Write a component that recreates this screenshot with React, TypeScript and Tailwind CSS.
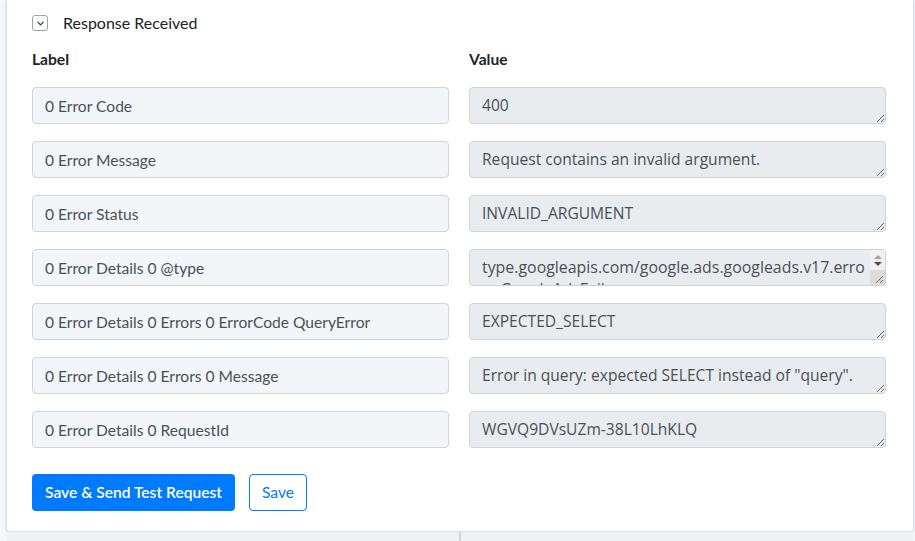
import { ChevronDown } from "lucide-react";

interface ResponseField {
  label: string;
  value: string;
  long?: boolean;
}

const fields: ResponseField[] = [
  { label: "0 Error Code", value: "400" },
  { label: "0 Error Message", value: "Request contains an invalid argument." },
  { label: "0 Error Status", value: "INVALID_ARGUMENT" },
  {
    label: "0 Error Details 0 @type",
    value: "type.googleapis.com/google.ads.googleads.v17.errors.GoogleAdsFailure",
    long: true,
  },
  { label: "0 Error Details 0 Errors 0 ErrorCode QueryError", value: "EXPECTED_SELECT" },
  {
    label: "0 Error Details 0 Errors 0 Message",
    value: 'Error in query: expected SELECT instead of "query".',
  },
  { label: "0 Error Details 0 RequestId", value: "WGVQ9DVsUZm-38L10LhKLQ" },
];

// little classic scrollbar shown on the textarea whose value wraps
function ScrollArrows() {
  return (
    <div className="pointer-events-none absolute right-px top-px flex h-[35px] w-[15px] flex-col overflow-hidden rounded-tr-[3px]">
      <div className="flex h-[20px] flex-col items-center justify-center gap-[3px] bg-[#f1f1f1]">
        <span className="h-0 w-0 border-x-[4px] border-b-[4px] border-x-transparent border-b-[#a3a3a3]" />
        <span className="h-0 w-0 border-x-[4px] border-t-[4px] border-x-transparent border-t-[#505050]" />
      </div>
      <div className="relative flex-1 bg-[#dcdcdc]">
        <svg className="absolute bottom-[1px] right-[1px]" width="9" height="9" viewBox="0 0 9 9">
          <path d="M8 1 L1 8 M8 5 L5 8" stroke="#6b6b6b" strokeWidth="1" />
        </svg>
      </div>
    </div>
  );
}

function FieldRow({ field }: { field: ResponseField }) {
  return (
    <div className="grid grid-cols-2 gap-x-5">
      <input
        className="h-[37px] w-full rounded-[4px] border border-[#ced4da] bg-[#f3f6f9] px-3 text-[15.6px] text-[#495057] outline-0"
        type="text"
        value={field.label}
        readOnly
      />
      <div className="relative">
        <textarea
          className={
            field.long
              ? "block h-[37px] w-full overflow-hidden rounded-[4px] border border-[#ced4da] bg-[#e9ecef] pl-3 pr-[19px] pt-[6px] text-[15.9px] leading-[22px] text-[#495057] outline-0 [font-family:'Open_Sans',sans-serif]"
              : "block h-[37px] w-full rounded-[4px] border border-[#ced4da] bg-[#e9ecef] px-3 pt-[6px] text-[15.6px] leading-[22px] text-[#495057] outline-0 [font-family:'Open_Sans',sans-serif]"
          }
          value={field.value}
          rows={1}
          disabled
        />
        {field.long && <ScrollArrows />}
      </div>
    </div>
  );
}

export default function App(): JSX.Element {
  return (
    <div className="h-[541px] w-[915px] overflow-hidden bg-[#f5f7fa] [font-family:Lato,sans-serif]">
      <div className="ml-[6px] w-[908px] rounded-b-[4px] border border-t-0 border-[#d8e2ee] bg-white pb-[20px] pl-[25px] pr-[27px] pt-[15px] shadow-[0_1px_3px_rgba(120,140,170,0.25)]">
        <div className="flex h-4 items-center">
          <span className="flex h-4 w-4 items-center justify-center rounded-[3px] border border-[#9ca3ab] text-[#333]">
            <ChevronDown size={11} strokeWidth={2.6} />
          </span>
          <span className="ml-[15px] text-[16px] text-[#222]">Response Received</span>
        </div>

        <div className="mt-[17px] grid grid-cols-2 gap-x-5 text-[15.6px] font-bold text-[#212529]">
          <span>Label</span>
          <span>Value</span>
        </div>

        <div className="mt-[16px] flex flex-col gap-[17px]">
          {fields.map((field) => (
            <FieldRow key={field.label} field={field} />
          ))}
        </div>

        <div className="mt-[26px] flex gap-[14px]">
          <button className="h-[37px] rounded-[4px] bg-[#007bff] px-[13px] text-[15.6px] font-semibold text-white">
            Save &amp; Send Test Request
          </button>
          <button className="h-[37px] rounded-[4px] border border-[#007bff] bg-white px-3 text-[15.6px] text-[#007bff]">
            Save
          </button>
        </div>
      </div>

      <div className="ml-[6px] flex h-[9px] w-[908px]">
        <div className="w-[453px] bg-[#eef2f5]" />
        <div className="w-[2px] bg-[#cfd4da]" />
        <div className="flex-1 bg-[#eef2f5]" />
      </div>
    </div>
  );
}
